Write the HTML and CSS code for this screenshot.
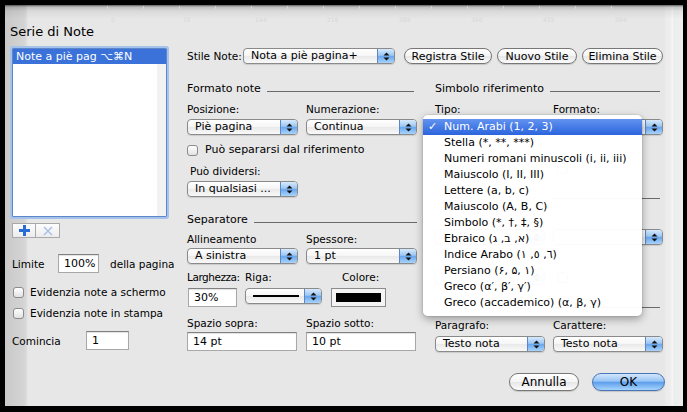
FILE: index.html
```html
<!DOCTYPE html>
<html lang="it">
<head>
<meta charset="utf-8">
<title>Serie di Note</title>
<link rel="stylesheet" href="styles.css">
</head>
<body>
<div class="sheet">
  <div class="ruler">
    <div class="ticks">
      <span>0</span><span>72</span><span>144</span><span>216</span><span>288</span><span>360</span><span>432</span><span>504</span>
    </div>
  </div>
  <div class="main">
    <div class="leftcol">
      <div class="title">Serie di Note</div>
      <div class="list">
        <div class="item sel">Note a piè pag ⌥⌘N</div>
      </div>
      <div class="listbtns">
        <span class="sq"><svg width="11" height="11" viewBox="0 0 11 11"><rect x="4" y="0" width="3" height="11" fill="#2a6cd6"/><rect x="0" y="4" width="11" height="3" fill="#2a6cd6"/></svg></span>
        <span class="sq"><svg width="10" height="10" viewBox="0 0 10 10"><path d="M1 1 L9 9 M9 1 L1 9" stroke="#a9c3e6" stroke-width="1.6"/></svg></span>
      </div>
      <div class="limrow">
        <span class="lim-l">Limite</span>
        <span class="inp w-lim">100%</span>
        <span class="lim-r">della pagina</span>
      </div>
      <div class="chk chk1"><span class="cb"></span>Evidenzia note a schermo</div>
      <div class="chk chk2"><span class="cb"></span>Evidenzia note in stampa</div>
      <div class="comrow">
        <span class="com-l">Comincia</span>
        <span class="inp w-com">1</span>
      </div>
    </div>

    <div class="rightcol">
      <div class="stilerow">
        <span class="stile-l">Stile Note:</span>
        <div class="pop w-stile"><span class="t">Nota a piè pagina+</span><span class="s"><svg width="7" height="9" viewBox="0 0 7 9"><polygon points="3.5,0.5 6.5,3.5 0.5,3.5" fill="#111"/><polygon points="0.5,5.5 6.5,5.5 3.5,8.5" fill="#111"/></svg></span></div>
        <span class="btn w-reg">Registra Stile</span>
        <span class="btn w-nuovo">Nuovo Stile</span>
        <span class="btn w-elim">Elimina Stile</span>
      </div>

      <div class="sections">
        <div class="sec sec-l">
          <div class="hdr"><span>Formato note</span><i></i></div>
          <div class="labels r1"><span class="c1">Posizione:</span><span>Numerazione:</span></div>
          <div class="pops r2">
            <div class="pop w111"><span class="t">Piè pagina</span><span class="s"><svg width="7" height="9" viewBox="0 0 7 9"><polygon points="3.5,0.5 6.5,3.5 0.5,3.5" fill="#111"/><polygon points="0.5,5.5 6.5,5.5 3.5,8.5" fill="#111"/></svg></span></div>
            <div class="pop w111"><span class="t">Continua</span><span class="s"><svg width="7" height="9" viewBox="0 0 7 9"><polygon points="3.5,0.5 6.5,3.5 0.5,3.5" fill="#111"/><polygon points="0.5,5.5 6.5,5.5 3.5,8.5" fill="#111"/></svg></span></div>
          </div>
          <div class="chk chk-sep"><span class="cb"></span>Può separarsi dal riferimento</div>
          <div class="labels r-div"><span>Può dividersi:</span></div>
          <div class="pops r-divpop">
            <div class="pop w111"><span class="t">In qualsiasi ...</span><span class="s"><svg width="7" height="9" viewBox="0 0 7 9"><polygon points="3.5,0.5 6.5,3.5 0.5,3.5" fill="#111"/><polygon points="0.5,5.5 6.5,5.5 3.5,8.5" fill="#111"/></svg></span></div>
          </div>
          <div class="hdr hdr-sep"><span>Separatore</span><i></i></div>
          <div class="labels r-all"><span class="c1">Allineamento</span><span>Spessore:</span></div>
          <div class="pops r-allpop">
            <div class="pop w111"><span class="t">A sinistra</span><span class="s"><svg width="7" height="9" viewBox="0 0 7 9"><polygon points="3.5,0.5 6.5,3.5 0.5,3.5" fill="#111"/><polygon points="0.5,5.5 6.5,5.5 3.5,8.5" fill="#111"/></svg></span></div>
            <div class="pop w111"><span class="t">1 pt</span><span class="s"><svg width="7" height="9" viewBox="0 0 7 9"><polygon points="3.5,0.5 6.5,3.5 0.5,3.5" fill="#111"/><polygon points="0.5,5.5 6.5,5.5 3.5,8.5" fill="#111"/></svg></span></div>
          </div>
          <div class="labels r-larg"><span class="c-larg">Larghezza:</span><span class="c-riga">Riga:</span><span>Colore:</span></div>
          <div class="larrow">
            <span class="inp w-30">30%</span>
            <div class="pop w-riga"><span class="t"><b class="rline"></b></span><span class="s"><svg width="7" height="9" viewBox="0 0 7 9"><polygon points="3.5,0.5 6.5,3.5 0.5,3.5" fill="#111"/><polygon points="0.5,5.5 6.5,5.5 3.5,8.5" fill="#111"/></svg></span></div>
            <span class="well"><b></b></span>
          </div>
          <div class="labels r-spz"><span class="c1">Spazio sopra:</span><span>Spazio sotto:</span></div>
          <div class="spzrow">
            <span class="inp w110">14 pt</span>
            <span class="inp w110">10 pt</span>
          </div>
        </div>

        <div class="sec sec-r">
          <div class="hdr"><span>Simbolo riferimento</span><i></i></div>
          <div class="labels r1"><span class="c2">Tipo:</span><span>Formato:</span></div>
          <div class="pops r2 gap8">
            <div class="pop w110"><span class="t"></span><span class="s"><svg width="7" height="9" viewBox="0 0 7 9"><polygon points="3.5,0.5 6.5,3.5 0.5,3.5" fill="#111"/><polygon points="0.5,5.5 6.5,5.5 3.5,8.5" fill="#111"/></svg></span></div>
            <div class="pop w110"><span class="t"></span><span class="s"><svg width="7" height="9" viewBox="0 0 7 9"><polygon points="3.5,0.5 6.5,3.5 0.5,3.5" fill="#111"/><polygon points="0.5,5.5 6.5,5.5 3.5,8.5" fill="#111"/></svg></span></div>
          </div>
          <div class="ghostrow g1"><span class="gsp"></span><span class="cb"></span></div>
          <div class="hdr g-hdr1"><span class="gtxt"></span><i></i></div>
          <div class="ghostrow g-lab"></div>
          <div class="pops g-pops gap8">
            <div class="pop w110"><span class="t"></span><span class="s"><svg width="7" height="9" viewBox="0 0 7 9"><polygon points="3.5,0.5 6.5,3.5 0.5,3.5" fill="#111"/><polygon points="0.5,5.5 6.5,5.5 3.5,8.5" fill="#111"/></svg></span></div>
            <div class="pop w110"><span class="t"></span><span class="s"><svg width="7" height="9" viewBox="0 0 7 9"><polygon points="3.5,0.5 6.5,3.5 0.5,3.5" fill="#111"/><polygon points="0.5,5.5 6.5,5.5 3.5,8.5" fill="#111"/></svg></span></div>
          </div>
          <div class="ghostrow g2">
            <div class="pop w110"><span class="t"></span><span class="s"><svg width="7" height="9" viewBox="0 0 7 9"><polygon points="3.5,0.5 6.5,3.5 0.5,3.5" fill="#111"/><polygon points="0.5,5.5 6.5,5.5 3.5,8.5" fill="#111"/></svg></span></div>
            <span class="cb gchk"></span>
          </div>
          <div class="hdr g-hdr2"><span class="gtxt"></span><i></i></div>
          <div class="labels r-par"><span class="c2">Paragrafo:</span><span>Carattere:</span></div>
          <div class="pops r-parpop gap8">
            <div class="pop w110"><span class="t">Testo nota</span><span class="s"><svg width="7" height="9" viewBox="0 0 7 9"><polygon points="3.5,0.5 6.5,3.5 0.5,3.5" fill="#111"/><polygon points="0.5,5.5 6.5,5.5 3.5,8.5" fill="#111"/></svg></span></div>
            <div class="pop w110"><span class="t">Testo nota</span><span class="s"><svg width="7" height="9" viewBox="0 0 7 9"><polygon points="3.5,0.5 6.5,3.5 0.5,3.5" fill="#111"/><polygon points="0.5,5.5 6.5,5.5 3.5,8.5" fill="#111"/></svg></span></div>
          </div>

          <div class="menu">
            <div class="mi msel"><span class="ck">✓</span>Num. Arabi (1, 2, 3)</div>
            <div class="mi">Stella (*, **, ***)</div>
            <div class="mi">Numeri romani minuscoli (i, ii, iii)</div>
            <div class="mi">Maiuscolo (I, II, III)</div>
            <div class="mi">Lettere (a, b, c)</div>
            <div class="mi">Maiuscolo (A, B, C)</div>
            <div class="mi">Simbolo (*, †, ‡, §)</div>
            <div class="mi">Ebraico <bdo dir="ltr">(ג ,ב ,א)</bdo></div>
            <div class="mi">Indice Arabo <bdo dir="ltr">(١ ,٥ ,٦)</bdo></div>
            <div class="mi">Persiano <bdo dir="ltr">(۶, ۵, ۱)</bdo></div>
            <div class="mi">Greco (α′, β′, γ′)</div>
            <div class="mi">Greco (accademico) (α, β, γ)</div>
          </div>
        </div>
      </div>

      <div class="footer">
        <span class="btn w-ann">Annulla</span>
        <span class="btn ok w-ok">OK</span>
      </div>
    </div>
  </div>
</div>
</body>
</html>
```

FILE: styles.css
```css
html, body {
  margin: 0;
  padding: 0;
  background: #000;
}
body {
  font-family: "DejaVu Sans", "Noto Sans", sans-serif;
  font-size: 10.5px;
  color: #000;
}
.sheet {
  position: relative;
  margin: 5px 4px 0 5px;
  width: 678px;
  height: 401px;
  overflow: hidden;
  background:
    linear-gradient(to bottom, rgba(0,0,0,0.6) 0, rgba(0,0,0,0.18) 2px, rgba(0,0,0,0.06) 6px, rgba(0,0,0,0) 14px),
    linear-gradient(to right, #c9c9c9 0, #d4d4d4 19px, #dadada 21px, #e7e7e7 23px, #e7e7e7 659px, #ececec 661px, #eeeeee 666px, #f7f7f7 667px, #ededed 669px, #f0f0f0 678px);
}

/* faint document ruler showing through */
.ruler {
  height: 18px;
  padding-left: 102px;
}
.ticks {
  display: flex;
  width: 540px;
  height: 18px;
  background-image: repeating-linear-gradient(to right, #d3d3d3 0 1px, transparent 1px 36px);
  background-size: 540px 5px;
  background-repeat: no-repeat;
  background-position: 0 1px;
}
.ticks span {
  width: 72px;
  flex: none;
  padding-left: 4px;
  box-sizing: border-box;
  font-size: 6px;
  line-height: 8px;
  margin-top: 11px;
  color: #d7d7d7;
}

.main {
  display: flex;
  padding-left: 7px;
}

/* ---------- left column ---------- */
.leftcol {
  width: 155px;
  flex: none;
}
.title {
  margin-top: 1px;
  margin-left: -2px;
  font-size: 13px;
  line-height: 16px;
  height: 16px;
}
.list {
  margin-top: 8px;
  height: 169px;
  box-sizing: border-box;
  border: 1px solid #5f87c7;
  box-shadow: 0 0 0 2px #a3c3ec;
  background: linear-gradient(to right, #fff 0, #fff 144px, #f2f2f2 144px);
  border-radius: 1px;
}
.item {
  height: 15px;
  line-height: 15px;
  padding-left: 3px;
  white-space: nowrap;
  font-size: 11px;
}
.item.sel {
  background: #3a72d9;
  color: #fff;
}
.listbtns {
  display: flex;
  margin-top: 6px;
  height: 15px;
}
.sq {
  width: 24px;
  height: 15px;
  box-sizing: border-box;
  border: 1px solid #a9a9a9;
  background: linear-gradient(#fdfdfd, #ececec);
  display: flex;
  align-items: center;
  justify-content: center;
}
.sq + .sq {
  border-left: none;
}

.limrow, .comrow {
  display: flex;
  align-items: center;
  height: 19px;
  white-space: nowrap;
}
.limrow { margin-top: 16px; }
.lim-l { width: 46px; flex: none; }
.lim-r { margin-left: 11px; }
.comrow { margin-top: 11px; }
.com-l { width: 74px; flex: none; }

.inp {
  display: inline-block;
  height: 19px;
  box-sizing: border-box;
  border: 1px solid #a8a8a8;
  border-top-color: #808080;
  background: #fff;
  box-shadow: inset 0 1px 1px rgba(0,0,0,0.12);
  padding-left: 5px;
  line-height: 17px;
  white-space: nowrap;
  flex: none;
  font-size: 11px;
}
.w-lim { width: 41px; }
.w-com { width: 43px; }

.chk {
  display: flex;
  align-items: center;
  height: 14px;
  line-height: 14px;
  white-space: nowrap;
}
.cb {
  width: 11px;
  height: 11px;
  box-sizing: border-box;
  border: 1px solid #8b8b8b;
  border-radius: 3px;
  background: linear-gradient(#ffffff, #e2e2e2);
  margin-right: 7px;
  flex: none;
}
.leftcol .chk .cb { margin-left: 1px; margin-right: 6px; }
.chk1 { margin-top: 12px; }
.chk2 { margin-top: 7px; }

/* ---------- right column ---------- */
.rightcol {
  margin-left: 20px;
  width: 476px;
  flex: none;
}
.stilerow {
  display: flex;
  align-items: center;
  margin-top: 25px;
  height: 16px;
}
.stile-l { width: 56px; flex: none; white-space: nowrap; }
.w-stile { width: 152px; }
.btn {
  display: inline-flex;
  align-items: center;
  justify-content: center;
  height: 16px;
  box-sizing: border-box;
  border: 1px solid #777;
  border-radius: 9px;
  background: linear-gradient(#ffffff, #f4f4f4 50%, #e7e7e7 51%, #fbfbfb);
  box-shadow: 0 1px 1px rgba(0,0,0,0.15);
  white-space: nowrap;
  flex: none;
  font-size: 11px;
}
.w-reg { width: 88px; margin-left: 9px; }
.w-nuovo { width: 80px; margin-left: 5px; }
.w-elim { width: 81px; margin-left: 5px; }

.pop {
  display: flex;
  align-items: center;
  height: 16px;
  box-sizing: border-box;
  border: 1px solid #8a8a8a;
  border-radius: 4px;
  background: linear-gradient(#ffffff, #f5f5f5 50%, #e9e9e9 51%, #f9f9f9);
  box-shadow: 0 1px 1px rgba(0,0,0,0.12);
  overflow: hidden;
  flex: none;
  font-size: 11px;
}
.pop .t {
  flex: 1;
  padding-left: 7px;
  white-space: nowrap;
  overflow: hidden;
  line-height: 14px;
  display: flex;
  align-items: center;
  height: 14px;
}
.pop .s {
  width: 16px;
  align-self: stretch;
  border-left: 1px solid #5f86c2;
  background: linear-gradient(#d7eafc, #9cc7f4 45%, #69a7ee 52%, #a9d3fb);
  display: flex;
  align-items: center;
  justify-content: center;
  flex: none;
}
.w111 { width: 111px; }
.w110 { width: 110px; }
.w-riga { width: 77px; margin-left: 8px; }
.rline {
  display: block;
  width: 46px;
  height: 2px;
  background: #000;
}

.sections {
  display: flex;
  gap: 18px;
}
.sec {
  position: relative;
  flex: none;
}
.sec-l { width: 230px; }
.sec-r { width: 228px; }

.hdr {
  display: flex;
  align-items: center;
  height: 12px;
  line-height: 12px;
  margin-top: 19px;
  white-space: nowrap;
  font-size: 11px;
}
.hdr i {
  flex: 1;
  height: 1px;
  background: #6a6a6a;
  margin-left: 6px;
  margin-top: 5px;
  margin-right: 3px;
}
.hdr-sep i { margin-right: 0; }
.gtxt { width: 110px; }

.labels {
  display: flex;
  height: 12px;
  line-height: 12px;
  white-space: nowrap;
}
.labels .c1 { width: 119px; flex: none; }
.labels .c2 { width: 118px; flex: none; }
.r1 { margin-top: 8px; }
.pops {
  display: flex;
  gap: 8px;
}
.r2 { margin-top: 4px; }
.chk-sep { margin-top: 8px; font-size: 11px; }
.r-div { margin-top: 8px; padding-left: 3px; }
.r-divpop { margin-top: 4px; }
.hdr-sep { margin-top: 17px; }
.r-all { margin-top: 7px; }
.r-allpop { margin-top: 3px; }
.r-larg { margin-top: 7px; }
.c-larg { width: 58px; flex: none; letter-spacing: -0.45px; }
.c-riga { width: 97px; flex: none; }
.larrow {
  display: flex;
  margin-top: 5px;
  height: 19px;
}
.w-30 { width: 49px; margin-left: 1px; }
.well {
  margin-left: 9px;
  width: 55px;
  height: 19px;
  box-sizing: border-box;
  border: 1px solid #8c8c8c;
  background: #f4f4f4;
  padding: 4px 4px;
  display: flex;
}
.well b {
  flex: 1;
  background: #000;
}
.r-spz { margin-top: 10px; }
.spzrow {
  display: flex;
  gap: 9px;
  margin-top: 3px;
}
.w110.inp { width: 110px; }

/* rows hidden under the open menu */
.ghostrow {
  display: flex;
  align-items: center;
  height: 16px;
}
.g1 { margin-top: 25px; }
.gsp { width: 122px; }
.g-hdr1 { margin-top: 14px; }
.g-lab { margin-top: 7px; height: 12px; }
.g-pops { margin-top: 8px; }
.g2 { margin-top: 24px; }
.gchk { margin-left: 12px; }
.g-hdr2 { margin-top: 14px; }
.r-par { margin-top: 8px; }
.r-parpop { margin-top: 5px; }

.footer {
  display: flex;
  justify-content: flex-end;
  margin-top: 21px;
  margin-right: -2px;
  height: 18px;
}
.footer .btn { height: 18px; font-size: 12px; }
.w-ann { width: 70px; }
.w-ok { width: 73px; margin-left: 13px; }
.btn.ok {
  border-color: #4775b8;
  background: linear-gradient(#d2e7fc, #97c4f4 45%, #5d9eec 52%, #a7d4fc);
}

/* open popup menu */
.menu {
  position: absolute;
  left: -12px;
  top: 51px;
  width: 219px;
  height: 201px;
  box-sizing: border-box;
  padding-top: 4px;
  background: rgba(255,255,255,0.97);
  border-radius: 5px;
  box-shadow: 0 3px 9px rgba(0,0,0,0.35), 0 0 0 1px rgba(0,0,0,0.06);
}
.mi {
  position: relative;
  height: 16px;
  line-height: 16px;
  padding-left: 21px;
  white-space: nowrap;
  font-size: 11px;
}
.msel {
  background: linear-gradient(#6393ef, #2b64dd);
  color: #fff;
}
.ck {
  position: absolute;
  left: 5px;
  top: 0;
}
```
